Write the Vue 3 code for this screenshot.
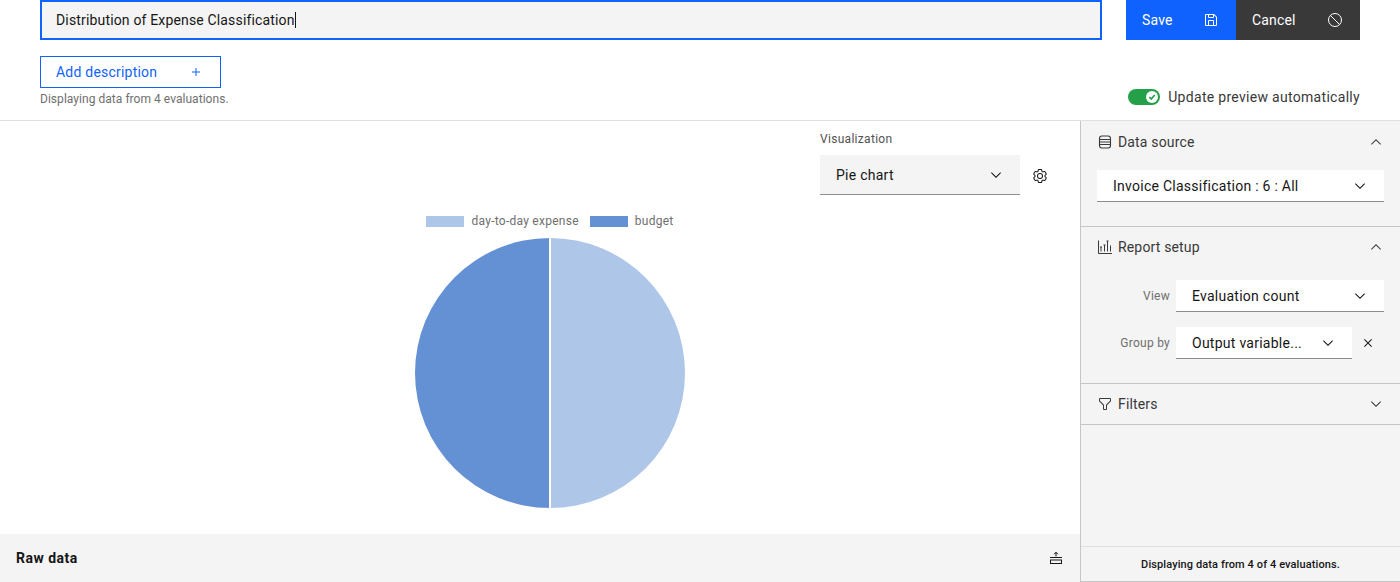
<template>
  <div class="page">
    <header class="top">
      <div class="title-row">
        <div class="title-input">Distribution of Expense Classification<span class="caret"></span></div>
        <div class="actions">
          <button class="btn save">
            <span>Save</span>
            <svg class="ico" viewBox="0 0 32 32" fill="currentColor"><path d="M27.71,9.29l-5-5A1,1,0,0,0,22,4H6A2,2,0,0,0,4,6V26a2,2,0,0,0,2,2H26a2,2,0,0,0,2-2V10A1,1,0,0,0,27.71,9.29ZM12,6h8v4H12Zm8,20H12V18h8Zm2,0V18a2,2,0,0,0-2-2H12a2,2,0,0,0-2,2v8H6V6h4v4a2,2,0,0,0,2,2h8a2,2,0,0,0,2-2V6.41l4,4V26Z"/></svg>
          </button>
          <button class="btn cancel">
            <span>Cancel</span>
            <svg class="ico" viewBox="0 0 32 32" fill="none" stroke="currentColor" stroke-width="2"><circle cx="16" cy="16" r="13"/><line x1="7" y1="7" x2="25" y2="25"/></svg>
          </button>
        </div>
      </div>
      <div class="desc-row">
        <div>
          <button class="add-desc">
            <span>Add description</span>
            <svg class="ico" viewBox="0 0 32 32" fill="currentColor"><path :d="icons.add"/></svg>
          </button>
          <p class="helper">Displaying data from 4 evaluations.</p>
        </div>
        <div class="auto">
          <span class="toggle">
            <span class="knob">
              <svg viewBox="0 0 12 12" width="8" height="8" fill="none" stroke="#24a148" stroke-width="2.6"><path d="M2 6.2 5 9 10 3"/></svg>
            </span>
          </span>
          <span>Update preview automatically</span>
        </div>
      </div>
    </header>

    <div class="body">
      <main class="left">
        <section class="canvas">
          <div class="viz-row">
            <div class="viz">
              <label>Visualization</label>
              <div class="select grey">
                <span>Pie chart</span>
                <svg class="ico" viewBox="0 0 32 32" fill="currentColor"><path :d="icons.down"/></svg>
              </div>
            </div>
            <svg class="ico gear" viewBox="0 0 32 32" fill="currentColor">
              <path d="M27,16.76c0-.25,0-.5,0-.76s0-.51,0-.77l1.92-1.68A2,2,0,0,0,29.3,11L26.94,7a2,2,0,0,0-1.73-1,2,2,0,0,0-.64.1l-2.43.82a11.35,11.35,0,0,0-1.31-.75l-.51-2.52a2,2,0,0,0-2-1.61H13.64a2,2,0,0,0-2,1.61l-.51,2.52a11.48,11.48,0,0,0-1.32.75L7.43,6.06A2,2,0,0,0,6.79,6,2,2,0,0,0,5.06,7L2.7,11a2,2,0,0,0,.41,2.51L5,15.24c0,.25,0,.5,0,.76s0,.51,0,.77L3.11,18.45A2,2,0,0,0,2.7,21L5.06,25a2,2,0,0,0,1.73,1,2,2,0,0,0,.64-.1l2.43-.82a11.35,11.35,0,0,0,1.31.75l.51,2.52a2,2,0,0,0,2,1.61h4.72a2,2,0,0,0,2-1.61l.51-2.52a11.48,11.48,0,0,0,1.32-.75l2.42.82a2,2,0,0,0,.64.1,2,2,0,0,0,1.73-1L29.3,21a2,2,0,0,0-.41-2.51ZM25.21,24l-3.43-1.16a8.86,8.86,0,0,1-2.71,1.57L18.36,28H13.64l-.71-3.55a9.36,9.36,0,0,1-2.7-1.57L6.79,24,4.43,20l2.72-2.4a8.9,8.9,0,0,1,0-3.13L4.43,12,6.79,8l3.43,1.16a8.86,8.86,0,0,1,2.71-1.57L13.64,4h4.72l.71,3.55a9.36,9.36,0,0,1,2.7,1.57L25.21,8,27.57,12l-2.72,2.4a8.9,8.9,0,0,1,0,3.13L27.57,20Z"/>
              <path d="M16,22a6,6,0,1,1,6-6A5.94,5.94,0,0,1,16,22Zm0-10a3.91,3.91,0,0,0-4,4,3.91,3.91,0,0,0,4,4,3.91,3.91,0,0,0,4-4A3.91,3.91,0,0,0,16,12Z"/>
            </svg>
          </div>
          <div class="legend">
            <span v-for="item in legend" :key="item.name" class="legend-item">
              <i :style="{ background: item.color }"></i>{{ item.name }}
            </span>
          </div>
          <svg class="pie" width="272" height="272" viewBox="0 0 272 272">
            <path d="M136 1 A135 135 0 0 1 136 271 Z" fill="#aec6e8"/>
            <path d="M136 1 A135 135 0 0 0 136 271 Z" fill="#6490d4"/>
            <line x1="136" y1="0" x2="136" y2="272" stroke="#fff" stroke-width="2"/>
          </svg>
        </section>
        <div class="raw">
          <strong>Raw data</strong>
          <svg class="ico" viewBox="0 0 16 16" fill="none" stroke="currentColor" stroke-width="1">
            <path d="M2 7.5H14"/>
            <rect x="2.5" y="10" width="11" height="3.5"/>
            <path d="M8 6.5V2.5M6 4.2 8 2.2 10 4.2"/>
          </svg>
        </div>
      </main>

      <aside class="side">
        <section class="panel source">
          <div class="panel-head">
            <svg class="ico" viewBox="0 0 16 16" fill="none" stroke="currentColor" stroke-width="1.1"><rect x="2.5" y="2" width="11" height="12" rx="2.5"/><path d="M2.5 5.5H13.5M2.5 8H13.5M2.5 10.5H13.5"/></svg>
            <span>Data source</span>
            <svg class="ico end" viewBox="0 0 32 32" fill="currentColor"><path :d="icons.up"/></svg>
          </div>
          <div class="select white">
            <span>Invoice Classification : 6 : All</span>
            <svg class="ico" viewBox="0 0 32 32" fill="currentColor"><path :d="icons.down"/></svg>
          </div>
        </section>
        <section class="panel setup">
          <div class="panel-head">
            <svg class="ico" viewBox="0 0 16 16" fill="none" stroke="currentColor" stroke-width="1"><path d="M1.5 1.5V14.5H15"/><path d="M4 12.5V8M3 8H5M7.5 12.5V6M6.5 6H8.5M10.5 12.5V2M9.5 2H11.5M13.5 12.5V6.5"/></svg>
            <span>Report setup</span>
            <svg class="ico end" viewBox="0 0 32 32" fill="currentColor"><path :d="icons.up"/></svg>
          </div>
          <div class="field">
            <label>View</label>
            <div class="select white">
              <span>Evaluation count</span>
              <svg class="ico" viewBox="0 0 32 32" fill="currentColor"><path :d="icons.down"/></svg>
            </div>
          </div>
          <div class="field">
            <label>Group by</label>
            <div class="select white short">
              <span>Output variable...</span>
              <svg class="ico" viewBox="0 0 32 32" fill="currentColor"><path :d="icons.down"/></svg>
            </div>
            <svg class="ico clear" viewBox="0 0 32 32" fill="currentColor"><path :d="icons.close"/></svg>
          </div>
        </section>
        <section class="panel filters">
          <div class="panel-head">
            <svg class="ico" viewBox="0 0 32 32" fill="currentColor"><path d="M18,28H14a2,2,0,0,1-2-2V18.41L4.59,11A2,2,0,0,1,4,9.59V6A2,2,0,0,1,6,4H26a2,2,0,0,1,2,2V9.59A2,2,0,0,1,27.41,11L20,18.41V26A2,2,0,0,1,18,28ZM6,6V9.59l8,8V26h4V17.59l8-8V6Z"/></svg>
            <span>Filters</span>
            <svg class="ico end" viewBox="0 0 32 32" fill="currentColor"><path :d="icons.down"/></svg>
          </div>
        </section>
        <div class="spacer"></div>
        <footer class="side-foot">Displaying data from 4 of 4 evaluations.</footer>
      </aside>
    </div>
  </div>
</template>

<script setup>
const icons = {
  add: 'M17 15L17 8 15 8 15 15 8 15 8 17 15 17 15 24 17 24 17 17 24 17 24 15z',
  down: 'M16 22L6 12 7.4 10.6 16 19.2 24.6 10.6 26 12z',
  up: 'M16 10L26 20 24.6 21.4 16 12.8 7.4 21.4 6 20z',
  close: 'M24 9.4L22.6 8 16 14.6 9.4 8 8 9.4 14.6 16 8 22.6 9.4 24 16 17.4 22.6 24 24 22.6 17.4 16 24 9.4z'
}

const legend = [
  { name: 'day-to-day expense', color: '#aec6e8' },
  { name: 'budget', color: '#6490d4' }
]
</script>

<style>
html, body {
  margin: 0;
  background: #fff;
}
</style>

<style scoped>
.page {
  width: 1400px;
  height: 582px;
  display: flex;
  flex-direction: column;
  overflow: hidden;
  font-family: Roboto, "Noto Sans", sans-serif;
  font-size: 14px;
  letter-spacing: 0.16px;
  color: #161616;
}
.ico {
  width: 16px;
  height: 16px;
  flex: none;
  display: block;
}
button {
  font: inherit;
  letter-spacing: inherit;
  border: 0;
  padding: 0;
  background: none;
}

.top {
  flex: none;
  box-sizing: border-box;
  padding: 0 40px;
  border-bottom: 1px solid #e0e0e0;
  height: 121px;
}
.title-row {
  display: flex;
  height: 40px;
}
.title-input {
  width: 1062px;
  box-sizing: border-box;
  border: 2px solid #0f62fe;
  background: #f4f4f4;
  padding: 0 14px;
  display: flex;
  align-items: center;
}
.caret {
  width: 1px;
  height: 16px;
  background: #161616;
}
.actions {
  display: flex;
  margin-left: 24px;
}
.btn {
  height: 40px;
  display: flex;
  align-items: center;
  justify-content: space-between;
  box-sizing: border-box;
  padding: 0 17px 0 16px;
  color: #fff;
}
.save {
  width: 110px;
  background: #0f62fe;
}
.cancel {
  width: 124px;
  background: #393939;
}
.desc-row {
  display: flex;
  justify-content: space-between;
  align-items: flex-end;
  margin-top: 16px;
}
.add-desc {
  width: 181px;
  height: 32px;
  box-sizing: border-box;
  border: 1px solid #0f62fe;
  color: #0f62fe;
  letter-spacing: 0.22px;
  display: flex;
  align-items: center;
  justify-content: space-between;
  padding: 0 16px 0 15px;
}
.helper {
  margin: 3px 0 0;
  font-size: 12px;
  line-height: 16px;
  letter-spacing: 0.04px;
  color: #6f6f6f;
}
.auto {
  display: flex;
  align-items: center;
  justify-content: space-between;
  width: 232px;
  height: 18px;
  margin-bottom: 1px;
  letter-spacing: 0.3px;
  color: #393939;
}
.toggle {
  width: 32px;
  height: 16px;
  border-radius: 8px;
  background: #24a148;
  display: flex;
  align-items: center;
  justify-content: flex-end;
  padding-right: 2px;
  box-sizing: border-box;
}
.knob {
  width: 12px;
  height: 12px;
  border-radius: 50%;
  background: #fff;
  display: flex;
  align-items: center;
  justify-content: center;
}

.body {
  flex: 1;
  display: flex;
  min-height: 0;
}
.left {
  width: 1080px;
  display: flex;
  flex-direction: column;
}
.canvas {
  flex: 1;
  display: flex;
  flex-direction: column;
  align-items: center;
  min-height: 0;
  padding-left: 20px;
}
.viz-row {
  align-self: flex-end;
  display: flex;
  align-items: flex-end;
  margin-top: 12px;
  margin-right: 32px;
  gap: 12px;
}
.viz {
  width: 200px;
}
.viz label {
  display: block;
  font-size: 12px;
  line-height: 12px;
  letter-spacing: 0.3px;
  color: #525252;
  margin-bottom: 10px;
}
.gear {
  margin-bottom: 11px;
}
.select {
  display: flex;
  align-items: center;
  justify-content: space-between;
  box-sizing: border-box;
  padding: 0 16px;
  letter-spacing: 0.26px;
  border-bottom: 1px solid #8d8d8d;
}
.select.grey {
  height: 40px;
  background: #f4f4f4;
}
.select.white {
  height: 32px;
  background: #fff;
}
.legend {
  display: flex;
  gap: 11px;
  margin-top: 19px;
  height: 14px;
  font-size: 12px;
  line-height: 14px;
  letter-spacing: 0.26px;
  color: #6f6f6f;
}
.legend-item {
  display: flex;
  align-items: center;
  gap: 7px;
}
.legend-item i {
  width: 38px;
  height: 11px;
  display: block;
}
.pie {
  margin-top: 9px;
  display: block;
}
.raw {
  height: 48px;
  flex: none;
  background: #f4f4f4;
  display: flex;
  align-items: center;
  justify-content: space-between;
  padding: 0 16px;
  letter-spacing: 0.5px;
}

.side {
  width: 320px;
  box-sizing: border-box;
  border-left: 1px solid #c6c6c6;
  border-bottom: 1px solid #c6c6c6;
  background: #f4f4f4;
  display: flex;
  flex-direction: column;
}
.panel {
  box-sizing: border-box;
  border-bottom: 1px solid #c6c6c6;
  flex: none;
}
.panel-head {
  height: 40px;
  display: flex;
  align-items: center;
  gap: 5px;
  padding: 0 16px;
  color: #393939;
}
.panel-head .end {
  margin-left: auto;
}
.source {
  height: 106px;
}
.source .panel-head {
  height: 42px;
}
.source .select {
  margin: 7px 16px 0;
}
.setup {
  height: 157px;
}
.filters {
  height: 41px;
}
.field {
  display: flex;
  align-items: center;
  margin: 13px 16px 0 0;
}
.field + .field {
  margin-top: 15px;
}
.field label {
  width: 89px;
  text-align: right;
  margin-right: 6px;
  font-size: 12px;
  letter-spacing: 0.25px;
  color: #6f6f6f;
}
.field .select {
  flex: 1;
}
.field .short {
  flex: none;
  width: 176px;
}
.clear {
  margin-left: 8px;
}
.spacer {
  flex: 1;
}
.side-foot {
  height: 35px;
  box-sizing: border-box;
  border-top: 1px solid #e0e0e0;
  font-size: 11px;
  font-weight: 500;
  letter-spacing: 0.1px;
  display: flex;
  align-items: center;
  justify-content: center;
}
</style>
